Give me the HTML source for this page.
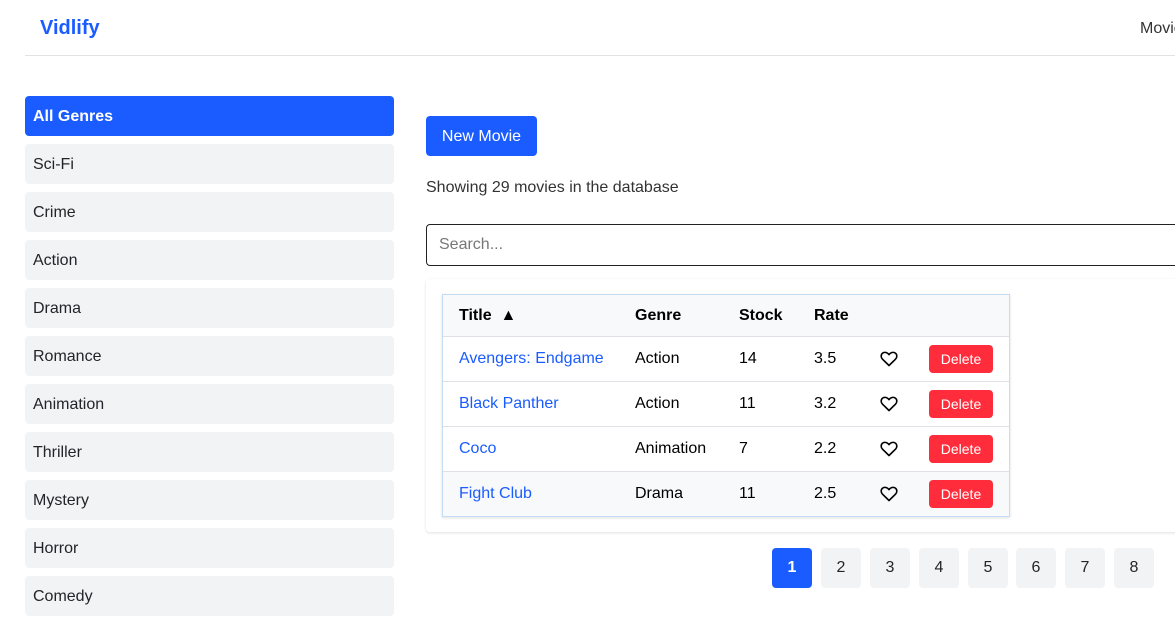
<!DOCTYPE html><html><head><style>
*{box-sizing:border-box;margin:0;padding:0}
body{width:1175px;height:638px;overflow:hidden;background:#fff;font-family:"Liberation Sans",sans-serif;position:relative;color:#212529}
.a{position:absolute}
.g{position:absolute;left:25px;width:369px;height:40px;background:#f2f3f5;border-radius:4px;font-size:16px;line-height:42px;padding-left:8px;color:#212529}
.pg{position:absolute;top:548px;width:40px;height:40px;background:#f2f3f5;border-radius:4px;text-align:center;line-height:40px;font-size:16px;color:#212529}
table{border-collapse:collapse;font-size:16px}
td,th{text-align:left;padding:1px 0 0 16px;border-bottom:1px solid #dee2e6}
th{height:41px;background:#f8f9fa;font-weight:bold;color:#000}
td{height:45px;color:#000}
td a{color:#1a5cff;text-decoration:none}
.del{background:#ff2d3b;color:#fff;border-radius:4px;font-size:14px;width:64px;height:28px;line-height:28px;text-align:center;display:inline-block;margin-left:16px}
svg{display:block}
</style></head><body>
<div class="a" style="left:40px;top:17px;font-size:20px;font-weight:bold;color:#1a5cff">Vidlify</div>
<div class="a" style="left:1140px;top:20px;font-size:16px;color:#333">Movies</div>
<div class="a" style="left:25px;top:55px;width:1150px;height:1px;background:#e2e2e2"></div>
<div class="g" style="top:96px;background:#1a5cff;color:#fff;font-weight:bold">All Genres</div>
<div class="g" style="top:144px">Sci-Fi</div>
<div class="g" style="top:192px">Crime</div>
<div class="g" style="top:240px">Action</div>
<div class="g" style="top:288px">Drama</div>
<div class="g" style="top:336px">Romance</div>
<div class="g" style="top:384px">Animation</div>
<div class="g" style="top:432px">Thriller</div>
<div class="g" style="top:480px">Mystery</div>
<div class="g" style="top:528px">Horror</div>
<div class="g" style="top:576px">Comedy</div>
<div class="a" style="left:426px;top:116px;width:111px;height:40px;background:#1a5cff;color:#fff;border-radius:4px;font-size:16px;line-height:41px;text-align:center">New Movie</div>
<div class="a" style="left:426px;top:179px;font-size:16px;color:#333">Showing 29 movies in the database</div>
<div class="a" style="left:426px;top:224px;width:760px;height:42px;border:1px solid #222;border-radius:4px;font-size:16px;line-height:40px;padding-left:12px;color:#777">Search...</div>
<div class="a" style="left:426px;top:279px;width:760px;height:253px;border-radius:4px;box-shadow:0 1px 3px rgba(0,0,0,.12)"></div>
<div class="a" style="left:442px;top:294px;width:568px;border:1px solid #c5dcf5;box-shadow:0 1px 3px rgba(0,0,0,.12)">
<table style="width:566px">
<tr><th style="width:176px;height:40px">Title &nbsp;▲</th><th style="width:104px">Genre</th><th style="width:75px">Stock</th><th style="width:66px">Rate</th><th style="width:49px"></th><th></th></tr>
<tr><td><a>Avengers: Endgame</a></td><td>Action</td><td>14</td><td>3.5</td><td><svg width="18" height="16" viewBox="0 0 18 16"><path d="M9 14.5L2.5 8.2C0.6 6.3 0.8 3.3 2.8 2 4.7 0.8 7.4 1.4 9 3.6 10.6 1.4 13.3 0.8 15.2 2 17.2 3.3 17.4 6.3 15.5 8.2Z" fill="none" stroke="#000" stroke-width="1.6" stroke-linejoin="round"/></svg></td><td style="padding-left:0"><span class="del">Delete</span></td></tr>
<tr><td><a>Black Panther</a></td><td>Action</td><td>11</td><td>3.2</td><td><svg width="18" height="16" viewBox="0 0 18 16"><path d="M9 14.5L2.5 8.2C0.6 6.3 0.8 3.3 2.8 2 4.7 0.8 7.4 1.4 9 3.6 10.6 1.4 13.3 0.8 15.2 2 17.2 3.3 17.4 6.3 15.5 8.2Z" fill="none" stroke="#000" stroke-width="1.6" stroke-linejoin="round"/></svg></td><td style="padding-left:0"><span class="del">Delete</span></td></tr>
<tr><td><a>Coco</a></td><td>Animation</td><td>7</td><td>2.2</td><td><svg width="18" height="16" viewBox="0 0 18 16"><path d="M9 14.5L2.5 8.2C0.6 6.3 0.8 3.3 2.8 2 4.7 0.8 7.4 1.4 9 3.6 10.6 1.4 13.3 0.8 15.2 2 17.2 3.3 17.4 6.3 15.5 8.2Z" fill="none" stroke="#000" stroke-width="1.6" stroke-linejoin="round"/></svg></td><td style="padding-left:0"><span class="del">Delete</span></td></tr>
<tr style="background:#f8f9fa"><td style="border:0"><a>Fight Club</a></td><td style="border:0">Drama</td><td style="border:0">11</td><td style="border:0">2.5</td><td style="border:0"><svg width="18" height="16" viewBox="0 0 18 16"><path d="M9 14.5L2.5 8.2C0.6 6.3 0.8 3.3 2.8 2 4.7 0.8 7.4 1.4 9 3.6 10.6 1.4 13.3 0.8 15.2 2 17.2 3.3 17.4 6.3 15.5 8.2Z" fill="none" stroke="#000" stroke-width="1.6" stroke-linejoin="round"/></svg></td><td style="padding-left:0;border:0"><span class="del">Delete</span></td></tr>
</table></div>
<div class="pg" style="left:772px;background:#1a5cff;color:#fff;font-weight:bold">1</div>
<div class="pg" style="left:821px">2</div>
<div class="pg" style="left:870px">3</div>
<div class="pg" style="left:919px">4</div>
<div class="pg" style="left:968px">5</div>
<div class="pg" style="left:1016px">6</div>
<div class="pg" style="left:1065px">7</div>
<div class="pg" style="left:1114px">8</div>
</body></html>
